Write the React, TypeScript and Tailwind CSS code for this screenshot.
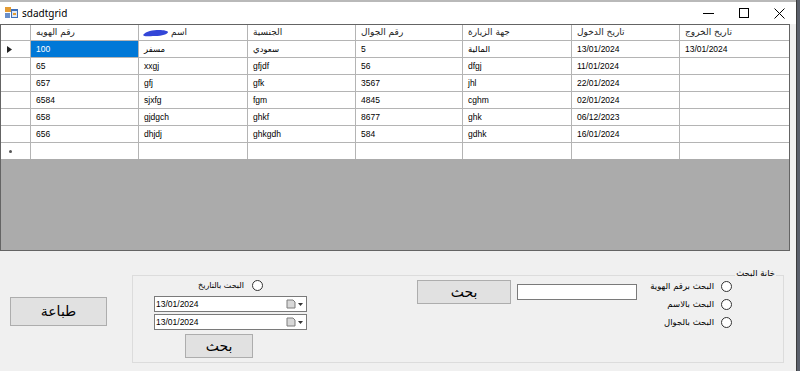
import React from "react";

const COLS = ["رقم الهويه", "اسم", "الجنسية", "رقم الجوال", "جهة الزيارة", "تاريخ الدخول", "تاريخ الخروج"];

const ROWS = [
  ["100", "مسفر", "سعودي", "5", "المالية", "13/01/2024", "13/01/2024"],
  ["65", "xxgj", "gfjdf", "56", "dfgj", "11/01/2024", ""],
  ["657", "gfj", "gfk", "3567", "jhl", "22/01/2024", ""],
  ["6584", "sjxfg", "fgm", "4845", "cghm", "02/01/2024", ""],
  ["658", "gjdgch", "ghkf", "8677", "ghk", "06/12/2023", ""],
  ["656", "dhjdj", "ghkgdh", "584", "gdhk", "16/01/2024", ""],
];

const GRID = "grid grid-cols-[30px_108px_109px_108px_107px_109px_108px_108px]";

function Radio() {
  return <span className="w-[11px] h-[11px] rounded-full border border-[#333] bg-white shrink-0" />;
}

function DatePick() {
  return (
    <div className="h-[16px] w-[153px] border border-[#7a7a7a] bg-white flex items-center pl-[1px] pr-[2px]">
      <span className="text-[8.5px] text-black">13/01/2024</span>
      <svg width="18" height="10" viewBox="0 0 18 10" className="ml-auto">
        <path d="M1 1h6l2 2v6H1z" fill="#d8d8d8" stroke="#7c7c7c" strokeWidth="1" />
        <path d="M12 4h5l-2.5 3z" fill="#333" />
      </svg>
    </div>
  );
}

function Btn({ label, className }: { label: string; className: string }) {
  return (
    <div className={`bg-[#e1e1e1] border border-[#adadad] flex items-center justify-center font-['DejaVu_Sans',sans-serif] text-[14px] text-black ${className}`}>
      {label}
    </div>
  );
}

export default function App() {
  return (
    <div className="w-[800px] h-[371px] flex bg-[#f0f0f0] overflow-hidden font-['Liberation_Sans','DejaVu_Sans',sans-serif] text-black">
      <div className="w-[797px] flex flex-col border-r border-[#3c3c3c]">
        {/* title bar */}
        <div className="h-[2px] bg-[#b9b9b9]" />
        <div className="h-[22px] bg-white flex items-center">
          <svg width="13" height="12" viewBox="0 0 13 12" className="ml-[5px]">
            <rect x="0" y="0" width="6" height="5" fill="#e39b33" />
            <rect x="0" y="6" width="5" height="5" fill="#6a8fc9" />
            <rect x="6" y="2" width="7" height="9" fill="#3f6fb8" />
            <rect x="7" y="4" width="5" height="6" fill="#dfe9f6" />
            <rect x="8" y="6" width="3" height="2" fill="#e39b33" />
          </svg>
          <span className="ml-[4px] font-['Noto_Sans',sans-serif] text-[10px]">sdadtgrid</span>
          <div className="ml-auto flex items-center h-full">
            <div className="w-[35px] flex justify-center">
              <span className="w-[11px] h-px bg-black" />
            </div>
            <div className="w-[35px] flex justify-center">
              <span className="w-[10px] h-[10px] border border-black" />
            </div>
            <div className="w-[35px] flex justify-center pl-[2px]">
              <svg width="11" height="11" viewBox="0 0 11 11">
                <path d="M0.5 0.5l10 10M10.5 0.5l-10 10" stroke="#000" strokeWidth="1" />
              </svg>
            </div>
          </div>
        </div>

        {/* data grid */}
        <div className="w-[790px] h-[227px] border border-[#646464] flex flex-col bg-[#ababab]">
          <div className={`${GRID} h-[16px] bg-white border-b border-[#b4b4b4]`}>
            <div className="border-r border-[#b4b4b4]" />
            {COLS.map((c, i) => (
              <div key={c} className="border-r border-[#b4b4b4] last:border-r-0 flex items-center pl-[5px] text-[9px] font-['DejaVu_Sans',sans-serif] text-[#222]">
                {i === 1 && (
                  <svg width="27" height="8" viewBox="0 0 27 8" className="mr-[2px] -ml-[2px]">
                    <path d="M1 6c3-4 10-5 16-5 5 0 9 1 9 2 0 2-6 4-13 4C7 7 2 8 1 6z" fill="#3346d8" />
                  </svg>
                )}
                <span>{c}</span>
              </div>
            ))}
          </div>
          {ROWS.map((r, ri) => (
            <div key={ri} className={`${GRID} h-[17px] bg-white border-b border-[#b4b4b4]`}>
              <div className="border-r border-[#b4b4b4] flex items-center pl-[6px]">
                {ri === 0 && (
                  <svg width="5" height="7" viewBox="0 0 5 7">
                    <path d="M0 0l5 3.5L0 7z" fill="#222" />
                  </svg>
                )}
              </div>
              {r.map((v, ci) => (
                <div
                  key={ci}
                  className={`border-r border-[#b4b4b4] last:border-r-0 flex items-center pl-[5px] text-[8.5px] ${
                    ri === 0 && ci === 0 ? "bg-[#0078d7] text-white" : ""
                  }`}
                >
                  {v}
                </div>
              ))}
            </div>
          ))}
          <div className={`${GRID} h-[16px] bg-white`}>
            <div className="border-r border-[#b4b4b4] flex items-center pl-[8px]">
              <span className="w-[3px] h-[3px] rounded-full bg-[#555]" />
            </div>
            {COLS.map((c) => (
              <div key={c} className="border-r border-[#b4b4b4] last:border-r-0" />
            ))}
          </div>
          <div className="flex-1 bg-[#ababab]" />
        </div>

        {/* bottom panel */}
        <div className="flex-1 flex items-start pl-[10px]">
          <Btn label="طباعة" className="mt-[46px] w-[97px] h-[29px]" />
          <div className="relative ml-[25px] mt-[24px] w-[652px] h-[88px] border border-[#dcdcdc] flex items-start">
            <span className="absolute -top-[7px] right-[7px] bg-[#f0f0f0] px-[1px] text-[8.5px] font-['DejaVu_Sans',sans-serif] leading-none">
              خانة البحث
            </span>

            <div className="ml-[21px] mt-[3px] w-[153px] flex flex-col">
              <div className="h-[13px] flex items-center justify-center gap-[8px] text-[8px] font-['DejaVu_Sans',sans-serif]">
                <span>البحث بالتاريخ</span>
                <Radio />
              </div>
              <div className="mt-[4px]">
                <DatePick />
              </div>
              <div className="mt-[2px]">
                <DatePick />
              </div>
              <Btn label="بحث" className="mt-[4px] ml-[31px] w-[68px] h-[24px]" />
            </div>

            <Btn label="بحث" className="ml-[110px] mt-[4px] w-[94px] h-[24px]" />
            <div className="ml-[6px] mt-[8px] w-[120px] h-[16px] border border-[#7a7a7a] bg-white" />

            <div className="mt-[1px] w-[95px] flex flex-col items-end text-[8.5px] font-['DejaVu_Sans',sans-serif]">
              {["البحث برقم الهوية", "البحث بالاسم", "البحث بالجوال"].map((t) => (
                <div key={t} className="h-[18px] flex items-center gap-[7px]">
                  <span>{t}</span>
                  <Radio />
                </div>
              ))}
            </div>
          </div>
        </div>
      </div>
      <div className="flex-1 bg-[#5a5f6a]" />
    </div>
  );
}
